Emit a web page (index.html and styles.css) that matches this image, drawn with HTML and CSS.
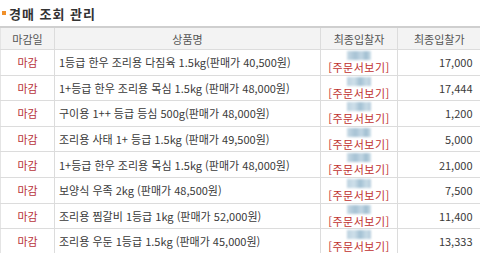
FILE: index.html
```html
<!DOCTYPE html>
<html lang="ko">
<head>
    <meta charset="UTF-8">
    <title>경매 조회 관리</title>
    <link rel="stylesheet" href="styles.css">
</head>
<body>
    <h1 class="title"><span class="bullet"></span>경매 조회 관리</h1>
    <table class="auction-table">
        <colgroup>
            <col class="col-date">
            <col class="col-name">
            <col class="col-bidder">
            <col class="col-price">
        </colgroup>
        <thead>
            <tr>
                <th>마감일</th>
                <th>상품명</th>
                <th>최종입찰자</th>
                <th>최종입찰가</th>
            </tr>
        </thead>
        <tbody>
            <tr>
                <td class="closed">마감</td>
                <td class="name">1등급 한우 조리용 다짐육 1.5kg(판매가 40,500원)</td>
                <td class="bidder"><div class="blur b1"></div><a href="#">[주문서보기]</a></td>
                <td class="price">17,000</td>
            </tr>
            <tr>
                <td class="closed">마감</td>
                <td class="name">1+등급 한우 조리용 목심 1.5kg (판매가 48,000원)</td>
                <td class="bidder"><div class="blur b2"></div><a href="#">[주문서보기]</a></td>
                <td class="price">17,444</td>
            </tr>
            <tr>
                <td class="closed">마감</td>
                <td class="name">구이용 1++ 등급 등심 500g(판매가 48,000원)</td>
                <td class="bidder"><div class="blur b2"></div><a href="#">[주문서보기]</a></td>
                <td class="price">1,200</td>
            </tr>
            <tr>
                <td class="closed">마감</td>
                <td class="name">조리용 사태 1+ 등급 1.5kg (판매가 49,500원)</td>
                <td class="bidder"><div class="blur b1"></div><a href="#">[주문서보기]</a></td>
                <td class="price">5,000</td>
            </tr>
            <tr>
                <td class="closed">마감</td>
                <td class="name">1+등급 한우 조리용 목심 1.5kg (판매가 48,000원)</td>
                <td class="bidder"><div class="blur b1"></div><a href="#">[주문서보기]</a></td>
                <td class="price">21,000</td>
            </tr>
            <tr>
                <td class="closed">마감</td>
                <td class="name">보양식 우족 2kg (판매가 48,500원)</td>
                <td class="bidder"><div class="blur b2"></div><a href="#">[주문서보기]</a></td>
                <td class="price">7,500</td>
            </tr>
            <tr>
                <td class="closed">마감</td>
                <td class="name">조리용 찜갈비 1등급 1kg (판매가 52,000원)</td>
                <td class="bidder"><div class="blur b1"></div><a href="#">[주문서보기]</a></td>
                <td class="price">11,400</td>
            </tr>
            <tr>
                <td class="closed">마감</td>
                <td class="name">조리용 우둔 1등급 1.5kg (판매가 45,000원)</td>
                <td class="bidder"><div class="blur b2"></div><a href="#">[주문서보기]</a></td>
                <td class="price">13,333</td>
            </tr>
        </tbody>
    </table>
</body>
</html>
```

FILE: styles.css
```css
body {
    margin: 0;
    font-family: "Noto Sans CJK KR", "Noto Sans", sans-serif;
    font-size: 11px;
    color: #444;
    background: #fff;
}
.title {
    display: flex;
    align-items: center;
    margin: 0;
    padding: 4px 0 0 2px;
    height: 18px;
    font-size: 13px;
    font-weight: bold;
    letter-spacing: 1px;
    color: #333;
}
.bullet {
    width: 4px;
    height: 4px;
    margin-right: 3px;
    background: #f0902a;
}
.auction-table {
    margin-top: 4px;
    width: 480px;
    border-collapse: collapse;
    table-layout: fixed;
    border-top: 2px solid #cfcfcf;
}
.col-date { width: 54px; }
.col-name { width: 266px; }
.col-bidder { width: 77px; }
.col-price { width: 83px; }
.auction-table th {
    height: 21px;
    padding: 0;
    background: #f3f3f3;
    font-weight: normal;
    color: #555;
    border: 1px solid #dcdcdc;
    border-top: none;
}
.auction-table td {
    height: 24.6px;
    padding: 0;
    border: 1px solid #dcdcdc;
    line-height: 12px;
    white-space: nowrap;
    overflow: hidden;
}
.auction-table tr > :first-child {
    border-left: 1px solid #e4e4e4;
}
.auction-table tr > :last-child {
    border-right: none;
}
.closed {
    text-align: center;
    color: #b8343a;
}
.name {
    padding-left: 4px !important;
    color: #3a3a3a;
}
.auction-table td.bidder {
    text-align: center;
    vertical-align: top;
}
.bidder a {
    display: block;
    color: #c0302e;
    text-decoration: none;
    letter-spacing: 0.5px;
}
.blur {
    width: 24px;
    height: 9px;
    margin: 1px auto;
    filter: blur(0.8px);
}
.b1 {
    background: linear-gradient(90deg, #c9dbe6 0%, #a6c2d4 35%, #c3d7e4 60%, #9fbdd0 80%, #cfe0ea 100%);
}
.b2 {
    background: linear-gradient(90deg, #bcd2e0 0%, #cfe0ea 30%, #a1bfd2 55%, #c8dbe6 80%, #b3cbdb 100%);
}
.price {
    text-align: right;
    padding-right: 8px !important;
    color: #3a3a3a;
}
```
